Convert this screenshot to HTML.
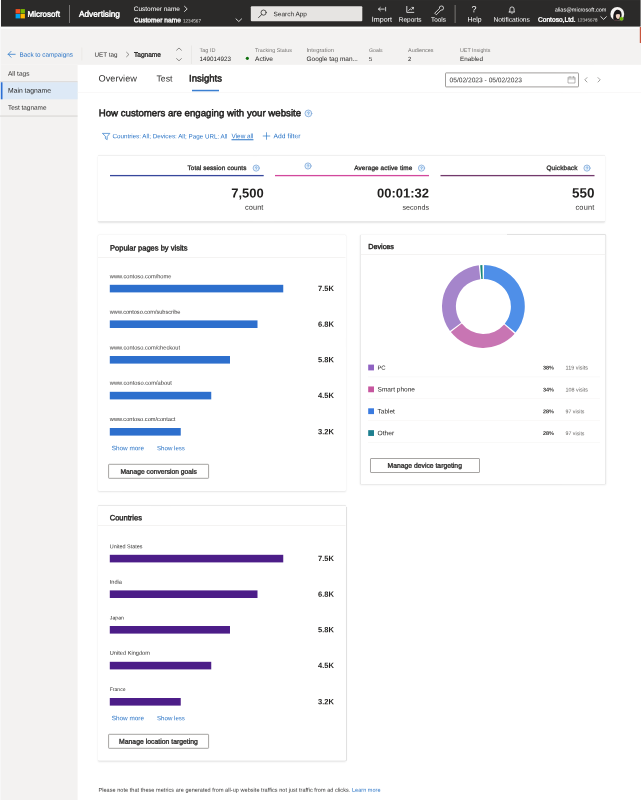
<!DOCTYPE html>
<html><head><meta charset="utf-8"><title>UET Insights</title>
<style>
html,body{margin:0;padding:0;}
body{width:641px;height:800px;position:relative;overflow:hidden;background:#fff;font-family:"Liberation Sans",sans-serif;text-rendering:geometricPrecision;}
.t{position:absolute;left:0;top:0;transform-origin:0 0;white-space:pre;display:block;}
.a{position:absolute;}
.card{position:absolute;background:#fff;box-shadow:0 0.6px 2px rgba(0,0,0,.10),0 0 0.9px rgba(0,0,0,.11);border-radius:1px;}
.btn{position:absolute;background:#fff;border:0.75px solid #a6a4a2;border-radius:1px;box-sizing:border-box;}
svg{position:absolute;overflow:visible;}
#w{position:absolute;left:0;top:0;width:641px;height:800px;transform-origin:0 0;will-change:transform;}
#v{filter:blur(0.3px);position:absolute;left:0;top:0;width:641px;height:800px;transform-origin:0 0;transform:rotate(0.001deg);}
</style></head><body><div id="w"><div id="v">
<svg width="641" height="800" style="left:0;top:0" viewBox="0 0 641 800"><rect x="1" y="0" width="639.6" height="26.85" fill="#2b2a29"/><rect x="0" y="26.8" width="641" height="38" fill="#f3f2f1"/><rect x="1" y="26.85" width="640" height="1.9" fill="#fbfbfa"/><rect x="0" y="65" width="77.6" height="735" fill="#f3f2f1"/><rect x="639.8" y="27" width="1.2" height="16" fill="#c8553d"/><rect x="0" y="0" width="1" height="800" fill="#f7f7f7"/><rect x="15.6" y="9.1" width="4.4" height="4.4" fill="#f25022"/><rect x="20.5" y="9.1" width="4.4" height="4.4" fill="#7fba00"/><rect x="15.6" y="14" width="4.4" height="4.4" fill="#00a4ef"/><rect x="20.5" y="14" width="4.4" height="4.4" fill="#ffb900"/><rect x="69.2" y="5" width="0.8" height="18" fill="#8a8886"/><rect x="454.7" y="5" width="0.8" height="18" fill="#8a8886"/><rect x="250.8" y="6.3" width="111.5" height="15" fill="#e6e4e2" rx="1"/><rect x="0" y="81.4" width="77.6" height="0.9" fill="#d2d0ce"/><rect x="0" y="82.3" width="77.6" height="17" fill="#dde9f6"/><rect x="0.9" y="82.3" width="1.6" height="17" fill="#2b6fd4"/><rect x="0" y="115.6" width="77.6" height="0.9" fill="#d2d0ce"/><rect x="81.6" y="47.5" width="0.6" height="13" fill="#e6e4e2"/><rect x="191" y="45.5" width="0.6" height="18.5" fill="#e3e1df"/><rect x="245.8" y="56.8" width="3.1" height="3.1" fill="#0e700e" rx="1.55"/><rect x="77.6" y="92.4" width="564" height="0.6" fill="#f5f4f3"/><rect x="192" y="89.8" width="27" height="1.5" fill="#3b7fd1"/></svg>
<div class="a" style="left:0;top:0;transform:translate(445px,72.4px);width:134px;height:14.5px;box-sizing:border-box;border:0.7px solid #a19f9d;border-radius:1px;background:#fff"></div>
<div class="card" style="left:0;top:0;transform:translate(98px,155.5px);width:507px;height:65.5px"></div>
<div class="card" style="left:0;top:0;transform:translate(98px,235px);width:247.5px;height:255.8px"></div>
<div class="card" style="left:0;top:0;transform:translate(360.5px,235px);width:244.7px;height:248.8px"></div>
<div class="card" style="left:0;top:0;transform:translate(98px,505.7px);width:247.5px;height:255.3px"></div>
<svg width="641" height="800" style="left:0;top:0" viewBox="0 0 641 800"></svg>
<svg width="641" height="800" style="left:0;top:0" viewBox="0 0 641 800"><rect x="110" y="174.95" width="153.7" height="1.3" fill="#37479c"/><rect x="275" y="174.95" width="154" height="1.3" fill="#d2479c"/><rect x="440.5" y="174.95" width="154" height="1.3" fill="#72386b"/><rect x="98" y="257.3" width="247.5" height="0.6" fill="#edebe9"/><rect x="360.5" y="254.2" width="244.7" height="0.6" fill="#edebe9"/><rect x="98" y="525" width="247.5" height="0.6" fill="#edebe9"/><rect x="109.8" y="284.8" width="173.45" height="7.6" fill="#2d6fcd"/><rect x="109.8" y="554.8" width="173.45" height="7.6" fill="#4c1d88"/><rect x="109.8" y="320.4" width="147.7" height="7.6" fill="#2d6fcd"/><rect x="109.8" y="590.4" width="147.7" height="7.6" fill="#4c1d88"/><rect x="109.8" y="356.0" width="120.2" height="7.6" fill="#2d6fcd"/><rect x="109.8" y="626.0" width="120.2" height="7.6" fill="#4c1d88"/><rect x="109.8" y="391.8" width="101.45" height="7.6" fill="#2d6fcd"/><rect x="109.8" y="661.8" width="101.45" height="7.6" fill="#4c1d88"/><rect x="109.8" y="428.0" width="70.95" height="7.6" fill="#2d6fcd"/><rect x="109.8" y="698.0" width="70.95" height="7.6" fill="#4c1d88"/></svg>
<div class="btn" style="left:0;top:0;transform:translate(108.1px,463.8px);width:100.8px;height:14.8px"></div>
<div class="btn" style="left:0;top:0;transform:translate(370px,458px);width:110px;height:14.5px"></div>
<div class="btn" style="left:0;top:0;transform:translate(108.1px,733.8px);width:100.8px;height:14.9px"></div>
<svg width="641" height="800" style="left:0;top:0" viewBox="0 0 641 800"><rect x="368.2" y="364.6" width="5.8" height="5.8" fill="#8f62c2"/><rect x="368" y="376.6" width="232" height="0.6" fill="#f6f5f4"/><rect x="368.2" y="386.45" width="5.8" height="5.8" fill="#c6569f"/><rect x="368" y="398.45" width="232" height="0.6" fill="#f6f5f4"/><rect x="368.2" y="408.3" width="5.8" height="5.8" fill="#3a7be0"/><rect x="368" y="420.3" width="232" height="0.6" fill="#f6f5f4"/><rect x="368.2" y="430.15" width="5.8" height="5.8" fill="#1e7f8f"/><rect x="368" y="442.15" width="232" height="0.6" fill="#f6f5f4"/></svg>
<svg width="641" height="800" style="left:0;top:0" viewBox="0 0 641 800"><path d="M484.12 265.11A41.4 41.4 0 0 1 515.57 332.55L504.77 323.81A27.5 27.5 0 0 0 483.88 279.00Z" fill="#4f8fe8"/><path d="M514.64 333.66A41.4 41.4 0 0 1 450.87 332.10L461.79 323.51A27.5 27.5 0 0 0 504.15 324.54Z" fill="#c875b3"/><path d="M449.99 330.95A41.4 41.4 0 0 1 478.79 265.36L480.33 279.17A27.5 27.5 0 0 0 461.21 322.74Z" fill="#a585cb"/><path d="M480.22 265.22A41.4 41.4 0 0 1 482.39 265.11L482.73 279.01A27.5 27.5 0 0 0 481.29 279.08Z" fill="#17877a"/></svg><svg width="641" height="800" style="left:0;top:0" viewBox="0 0 641 800" fill="none" stroke-linecap="round" stroke-linejoin="round"><path d="M184.5 6.3L187.2 8.9L184.5 11.5" stroke="#ffffff" stroke-width="0.8" fill="none"/><path d="M236 18.9L238.8 21.5L241.6 18.9" stroke="#ffffff" stroke-width="0.8" fill="none"/><path d="M600.8 16.7L603.6 19.4L606.4 16.7" stroke="#ffffff" stroke-width="0.8" fill="none"/><circle cx="263.6" cy="12.6" r="2.6" stroke="#323130" stroke-width="0.8" fill="none"/><path d="M261.7 14.5L258.6 17.6" stroke="#323130" stroke-width="0.9" fill="none"/><path d="M378.5 9.1H384.2M380.3 7.4L378.5 9.1L380.3 10.8M385.6 7.3V10.9" stroke="#ffffff" stroke-width="0.75" fill="none"/><path d="M406.8 6.4V12.4H413.8" stroke="#ffffff" stroke-width="0.8" fill="none"/><path d="M408.6 10.6L410.2 8.8L411.4 9.8L413.4 7.4M413.4 9V7.4H411.8" stroke="#ffffff" stroke-width="0.7" fill="none"/><path d="M435 12.9L439.4 8.5A2.1 2.1 0 1 1 441 10.1L436.6 14.5Z" stroke="#ffffff" stroke-width="0.75" fill="none"/><path d="M509.9 11.3V9A2.1 2.1 0 0 1 514.1 9V11.3L514.8 12H509.2Z" stroke="#ffffff" stroke-width="0.75" fill="none"/><path d="M511.2 12.9A0.9 0.9 0 0 0 512.8 12.9" stroke="#ffffff" stroke-width="0.7" fill="none"/><path d="M8.2 54.3H15.2M11 51.4L8.2 54.3L11 57.2" stroke="#2f7bc9" stroke-width="0.8" fill="none"/><path d="M126.6 52.3L128.9 54.5L126.6 56.7" stroke="#605e5c" stroke-width="0.7" fill="none"/><path d="M176.6 50.2L179 48L181.4 50.2" stroke="#605e5c" stroke-width="0.7" fill="none"/><path d="M176.6 58.6L179 60.8L181.4 58.6" stroke="#605e5c" stroke-width="0.7" fill="none"/><path d="M568.4 77.2H575V83H568.4ZM568.4 78.9H575M570 76.4V77.5M573.4 76.4V77.5" stroke="#8a8886" stroke-width="0.6" fill="none"/><path d="M587 77.6L584.8 79.8L587 82" stroke="#7a7876" stroke-width="0.7" fill="none"/><path d="M598 77.6L600.2 79.8L598 82" stroke="#7a7876" stroke-width="0.7" fill="none"/><path d="M102.8 133.4H109.8L107.2 136.6V139.6L105.4 138.6V136.6Z" stroke="#2f7bc9" stroke-width="0.7" fill="none"/><path d="M263.2 136H269.8M266.5 132.7V139.3" stroke="#2f7bc9" stroke-width="0.7" fill="none"/></svg>
<svg width="641" height="800" style="left:0;top:0" viewBox="0 0 641 800" fill="none" stroke-linecap="round"><circle cx="308.4" cy="113.4" r="3.4" stroke="#80a8d8" stroke-width="0.8" fill="#e8f2fc"/><path d="M307.54999999999995 112.65A0.9 0.9 0 1 1 308.4 113.65V114.0" stroke="#3f86d2" stroke-width="0.55"/><circle cx="308.4" cy="114.85000000000001" r="0.32" fill="#3f86d2"/></svg>
<svg width="641" height="800" style="left:0;top:0" viewBox="0 0 641 800" fill="none" stroke-linecap="round"><circle cx="256.2" cy="168.1" r="3.1" stroke="#80a8d8" stroke-width="0.8" fill="#e8f2fc"/><path d="M255.42499999999998 167.41617647058823A0.8205882352941177 0.8205882352941177 0 1 1 256.2 168.32794117647057V168.64705882352942" stroke="#3f86d2" stroke-width="0.50"/><circle cx="256.2" cy="169.4220588235294" r="0.29" fill="#3f86d2"/></svg>
<svg width="641" height="800" style="left:0;top:0" viewBox="0 0 641 800" fill="none" stroke-linecap="round"><circle cx="308" cy="166" r="3.1" stroke="#80a8d8" stroke-width="0.8" fill="#e8f2fc"/><path d="M307.225 165.31617647058823A0.8205882352941177 0.8205882352941177 0 1 1 308 166.22794117647058V166.54705882352943" stroke="#3f86d2" stroke-width="0.50"/><circle cx="308" cy="167.3220588235294" r="0.29" fill="#3f86d2"/></svg>
<svg width="641" height="800" style="left:0;top:0" viewBox="0 0 641 800" fill="none" stroke-linecap="round"><circle cx="421.5" cy="168.1" r="3.1" stroke="#80a8d8" stroke-width="0.8" fill="#e8f2fc"/><path d="M420.725 167.41617647058823A0.8205882352941177 0.8205882352941177 0 1 1 421.5 168.32794117647057V168.64705882352942" stroke="#3f86d2" stroke-width="0.50"/><circle cx="421.5" cy="169.4220588235294" r="0.29" fill="#3f86d2"/></svg>
<svg width="641" height="800" style="left:0;top:0" viewBox="0 0 641 800" fill="none" stroke-linecap="round"><circle cx="587" cy="168.1" r="3.1" stroke="#80a8d8" stroke-width="0.8" fill="#e8f2fc"/><path d="M586.225 167.41617647058823A0.8205882352941177 0.8205882352941177 0 1 1 587 168.32794117647057V168.64705882352942" stroke="#3f86d2" stroke-width="0.50"/><circle cx="587" cy="169.4220588235294" r="0.29" fill="#3f86d2"/></svg>
<span class="t" style="transform:translate(470px,4.2px) rotate(0.03deg);width:8px;text-align:center;font-size:9px;line-height:10px;color:#fff;">?</span>
<svg width="641" height="800" style="left:0;top:0" viewBox="0 0 641 800">
<defs><clipPath id="av"><circle cx="617.3" cy="13.9" r="6.9"/></clipPath></defs>
<circle cx="617.3" cy="13.9" r="6.9" fill="#f6f4f2"/>
<g clip-path="url(#av)">
<path d="M613.6 21.5C612.8 17 613.2 11.6 616.2 10C619.6 8.6 621.8 11.4 621.6 15L620.8 21.5Z" fill="#1b1718"/>
<path d="M615.8 14.8C616.8 13.8 618.8 13.6 620 14.6C620.2 17 619.4 18.8 618 19.2C616.6 18.8 615.6 17 615.8 14.8Z" fill="#efd0c0"/>
<path d="M616.6 19L618 21.5L619.4 19V21.5H616.6Z" fill="#efd0c0"/>
<path d="M611.5 21.5C612.5 19.2 614.6 18.6 616.4 18.9L618 20.6L619.6 18.9C621.2 18.8 623 19.4 623.6 21.5Z" fill="#2a2022"/><path d="M613.6 21.5L615.4 19.8L617.4 21.5Z" fill="#6a2a3a"/>
</g>
<circle cx="621.5" cy="18.8" r="1.8" fill="#6bb700" stroke="#a4d65e" stroke-width="0.4"/>
</svg>
<span class="t" style="transform:translate(27.50px,9.72px) rotate(0.03deg);font-size:8.01px;line-height:10px;font-weight:400;color:#ffffff;letter-spacing:0.0px;-webkit-text-stroke:0.42px #ffffff;">Microsoft</span>
<span class="t" style="transform:translate(79.00px,8.72px) rotate(0.03deg);font-size:8.29px;line-height:10px;font-weight:400;color:#ffffff;letter-spacing:0.0px;-webkit-text-stroke:0.43px #ffffff;">Advertising</span>
<span class="t" style="transform:translate(133.75px,6.06px) rotate(0.03deg);font-size:6.5px;line-height:8px;font-weight:400;color:#ffffff;letter-spacing:0.0px;">Customer name</span>
<span class="t" style="transform:translate(133.75px,17.31px) rotate(0.03deg);font-size:6.64px;line-height:8px;font-weight:400;color:#ffffff;letter-spacing:0.0px;-webkit-text-stroke:0.35px #ffffff;">Customer name</span>
<span class="t" style="transform:translate(183.00px,18.60px) rotate(0.03deg);font-size:4.62px;line-height:6px;font-weight:400;color:#e1dfdd;letter-spacing:0.0px;">1234567</span>
<span class="t" style="transform:translate(273.50px,11.31px) rotate(0.03deg);font-size:6.48px;line-height:8px;font-weight:400;color:#2b2a29;letter-spacing:0.0px;">Search App</span>
<span class="t" style="transform:translate(371.75px,15.81px) rotate(0.03deg);font-size:7.15px;line-height:9px;font-weight:400;color:#ffffff;letter-spacing:0.0px;">Import</span>
<span class="t" style="transform:translate(398.75px,16.81px) rotate(0.03deg);font-size:6.5px;line-height:8px;font-weight:400;color:#ffffff;letter-spacing:0.0px;">Reports</span>
<span class="t" style="transform:translate(431.00px,16.81px) rotate(0.03deg);font-size:6.43px;line-height:8px;font-weight:400;color:#ffffff;letter-spacing:0.0px;">Tools</span>
<span class="t" style="transform:translate(467.50px,16.81px) rotate(0.03deg);font-size:6.81px;line-height:8px;font-weight:400;color:#ffffff;letter-spacing:-0.0px;">Help</span>
<span class="t" style="transform:translate(493.50px,16.81px) rotate(0.03deg);font-size:6.7px;line-height:8px;font-weight:400;color:#ffffff;letter-spacing:0.0px;">Notifications</span>
<span class="t" style="transform:translate(554.75px,7.44px) rotate(0.03deg);font-size:5.57px;line-height:7px;font-weight:400;color:#ffffff;letter-spacing:0.0px;">alias@microsoft.com</span>
<span class="t" style="transform:translate(538.00px,16.81px) rotate(0.03deg);font-size:6.61px;line-height:8px;font-weight:400;color:#ffffff;letter-spacing:0.0px;-webkit-text-stroke:0.34px #ffffff;">Contoso,Ltd.</span>
<span class="t" style="transform:translate(577.50px,17.60px) rotate(0.03deg);font-size:4.49px;line-height:5px;font-weight:400;color:#e1dfdd;letter-spacing:0.0px;">12345678</span>
<span class="t" style="transform:translate(19.50px,51.74px) rotate(0.03deg);font-size:6.33px;line-height:8px;font-weight:400;color:#2a74c6;letter-spacing:0.0px;">Back to campaigns</span>
<span class="t" style="transform:translate(94.50px,51.74px) rotate(0.03deg);font-size:6.3px;line-height:8px;font-weight:400;color:#323130;letter-spacing:0.0px;">UET tag</span>
<span class="t" style="transform:translate(134.00px,51.74px) rotate(0.03deg);font-size:6.56px;line-height:8px;font-weight:400;color:#323130;letter-spacing:0.0px;-webkit-text-stroke:0.34px #323130;">Tagname</span>
<span class="t" style="transform:translate(199.50px,47.90px) rotate(0.03deg);font-size:5.54px;line-height:7px;font-weight:400;color:#777573;letter-spacing:0.0px;">Tag ID</span>
<span class="t" style="transform:translate(199.50px,55.99px) rotate(0.03deg);font-size:6.29px;line-height:8px;font-weight:400;color:#201f1e;letter-spacing:0.0px;">149014923</span>
<span class="t" style="transform:translate(255.00px,47.90px) rotate(0.03deg);font-size:5.35px;line-height:6px;font-weight:400;color:#777573;letter-spacing:0.0px;">Tracking Status</span>
<span class="t" style="transform:translate(255.00px,55.99px) rotate(0.03deg);font-size:6.61px;line-height:8px;font-weight:400;color:#201f1e;letter-spacing:0.0px;">Active</span>
<span class="t" style="transform:translate(306.50px,47.90px) rotate(0.03deg);font-size:5.82px;line-height:7px;font-weight:400;color:#777573;letter-spacing:-0.0px;">Integration</span>
<span class="t" style="transform:translate(306.50px,55.99px) rotate(0.03deg);font-size:6.48px;line-height:8px;font-weight:400;color:#201f1e;letter-spacing:0.0px;">Google tag man...</span>
<span class="t" style="transform:translate(369.00px,47.90px) rotate(0.03deg);font-size:5.17px;line-height:6px;font-weight:400;color:#777573;letter-spacing:0.0px;">Goals</span>
<span class="t" style="transform:translate(369.00px,56.99px) rotate(0.03deg);font-size:5.94px;line-height:7px;font-weight:400;color:#201f1e;letter-spacing:0px;">5</span>
<span class="t" style="transform:translate(408.00px,47.90px) rotate(0.03deg);font-size:5.46px;line-height:7px;font-weight:400;color:#777573;letter-spacing:0.0px;">Audiences</span>
<span class="t" style="transform:translate(408.00px,56.99px) rotate(0.03deg);font-size:5.94px;line-height:7px;font-weight:400;color:#201f1e;letter-spacing:0px;">2</span>
<span class="t" style="transform:translate(460.00px,47.90px) rotate(0.03deg);font-size:5.35px;line-height:6px;font-weight:400;color:#777573;letter-spacing:0.0px;">UET Insights</span>
<span class="t" style="transform:translate(460.00px,55.99px) rotate(0.03deg);font-size:6.27px;line-height:8px;font-weight:400;color:#201f1e;letter-spacing:0.0px;">Enabled</span>
<span class="t" style="transform:translate(8.00px,70.74px) rotate(0.03deg);font-size:6.56px;line-height:8px;font-weight:400;color:#323130;letter-spacing:0.0px;">All tags</span>
<span class="t" style="transform:translate(8.00px,87.74px) rotate(0.03deg);font-size:6.79px;line-height:8px;font-weight:400;color:#201f1e;letter-spacing:0.0px;">Main tagname</span>
<span class="t" style="transform:translate(8.00px,104.74px) rotate(0.03deg);font-size:6.41px;line-height:8px;font-weight:400;color:#323130;letter-spacing:0.0px;">Test tagname</span>
<span class="t" style="transform:translate(98.50px,73.55px) rotate(0.03deg);font-size:9.24px;line-height:11px;font-weight:400;color:#323130;letter-spacing:0.0px;">Overview</span>
<span class="t" style="transform:translate(156.50px,73.55px) rotate(0.03deg);font-size:8.72px;line-height:10px;font-weight:400;color:#323130;letter-spacing:0.0px;">Test</span>
<span class="t" style="transform:translate(189.00px,73.55px) rotate(0.03deg);font-size:9.58px;line-height:11px;font-weight:400;color:#201f1e;letter-spacing:0.0px;-webkit-text-stroke:0.50px #201f1e;">Insights</span>
<span class="t" style="transform:translate(449.50px,77.14px) rotate(0.03deg);font-size:6.65px;line-height:8px;font-weight:400;color:#323130;letter-spacing:0.0px;">05/02/2023 - 05/02/2023</span>
<span class="t" style="transform:translate(98.75px,108.20px) rotate(0.03deg);font-size:9.66px;line-height:12px;font-weight:400;color:#201f1e;letter-spacing:0.0px;-webkit-text-stroke:0.50px #201f1e;">How customers are engaging with your website</span>
<span class="t" style="transform:translate(112.50px,133.34px) rotate(0.03deg);font-size:6.25px;line-height:8px;font-weight:400;color:#2a74c6;letter-spacing:0.0px;">Countries: All; Devices: All; Page URL: All</span>
<span class="t" style="transform:translate(231.50px,133.34px) rotate(0.03deg);font-size:6.42px;line-height:8px;font-weight:400;color:#2a74c6;letter-spacing:0.0px;text-decoration:underline;text-decoration-thickness:0.5px;text-underline-offset:0.8px;">View all</span>
<span class="t" style="transform:translate(273.50px,133.34px) rotate(0.03deg);font-size:6.72px;line-height:8px;font-weight:400;color:#2a74c6;letter-spacing:0.048px;">Add filter</span>
<span class="t" style="transform:translate(187.50px,164.94px) rotate(0.03deg);font-size:6.38px;line-height:8px;font-weight:400;color:#323130;letter-spacing:0.076px;-webkit-text-stroke:0.33px #323130;">Total session counts</span>
<span class="t" style="transform:translate(231.25px,185.50px) rotate(0.03deg);font-size:12.99px;line-height:16px;font-weight:700;color:#201f1e;letter-spacing:0.0px;">7,500</span>
<span class="t" style="transform:translate(245.00px,202.74px) rotate(0.03deg);font-size:7.39px;line-height:9px;font-weight:400;color:#323130;letter-spacing:0.083px;">count</span>
<span class="t" style="transform:translate(354.25px,164.94px) rotate(0.03deg);font-size:6.38px;line-height:8px;font-weight:400;color:#323130;letter-spacing:0.121px;-webkit-text-stroke:0.33px #323130;">Average active time</span>
<span class="t" style="transform:translate(377.00px,185.50px) rotate(0.03deg);font-size:12.99px;line-height:16px;font-weight:700;color:#201f1e;letter-spacing:-0.0px;">00:01:32</span>
<span class="t" style="transform:translate(402.50px,203.74px) rotate(0.03deg);font-size:7.11px;line-height:9px;font-weight:400;color:#323130;letter-spacing:0.0px;">seconds</span>
<span class="t" style="transform:translate(546.50px,164.94px) rotate(0.03deg);font-size:6.38px;line-height:8px;font-weight:400;color:#323130;letter-spacing:0.133px;-webkit-text-stroke:0.33px #323130;">Quickback</span>
<span class="t" style="transform:translate(572.00px,185.50px) rotate(0.03deg);font-size:13.49px;line-height:16px;font-weight:700;color:#201f1e;letter-spacing:0.0px;">550</span>
<span class="t" style="transform:translate(575.50px,202.74px) rotate(0.03deg);font-size:7.39px;line-height:9px;font-weight:400;color:#323130;letter-spacing:0.183px;">count</span>
<span class="t" style="transform:translate(110.00px,243.55px) rotate(0.03deg);font-size:7.54px;line-height:9px;font-weight:400;color:#201f1e;letter-spacing:0.0px;-webkit-text-stroke:0.39px #201f1e;">Popular pages by visits</span>
<span class="t" style="transform:translate(109.80px,274.30px) rotate(0.03deg);font-size:5.69px;line-height:7px;font-weight:400;color:#323130;letter-spacing:0.0px;">www.contoso.com/home</span>
<span class="t" style="transform:translate(318.00px,284.10px) rotate(0.03deg);font-size:7.57px;line-height:9px;font-weight:700;color:#201f1e;letter-spacing:0.0px;">7.5K</span>
<span class="t" style="transform:translate(109.80px,309.80px) rotate(0.03deg);font-size:5.6px;line-height:7px;font-weight:400;color:#323130;letter-spacing:0.0px;">www.contoso.com/subscribe</span>
<span class="t" style="transform:translate(318.00px,319.70px) rotate(0.03deg);font-size:7.57px;line-height:9px;font-weight:700;color:#201f1e;letter-spacing:0.0px;">6.8K</span>
<span class="t" style="transform:translate(109.80px,345.40px) rotate(0.03deg);font-size:5.69px;line-height:7px;font-weight:400;color:#323130;letter-spacing:0.0px;">www.contoso.com/checkout</span>
<span class="t" style="transform:translate(318.00px,355.30px) rotate(0.03deg);font-size:7.57px;line-height:9px;font-weight:700;color:#201f1e;letter-spacing:0.0px;">5.8K</span>
<span class="t" style="transform:translate(109.80px,380.80px) rotate(0.03deg);font-size:5.74px;line-height:7px;font-weight:400;color:#323130;letter-spacing:0.0px;">www.contoso.com/about</span>
<span class="t" style="transform:translate(318.00px,391.10px) rotate(0.03deg);font-size:7.57px;line-height:9px;font-weight:700;color:#201f1e;letter-spacing:0.0px;">4.5K</span>
<span class="t" style="transform:translate(109.80px,417.00px) rotate(0.03deg);font-size:5.68px;line-height:7px;font-weight:400;color:#323130;letter-spacing:0.0px;">www.contoso.com/contact</span>
<span class="t" style="transform:translate(318.00px,427.30px) rotate(0.03deg);font-size:7.57px;line-height:9px;font-weight:700;color:#201f1e;letter-spacing:0.0px;">3.2K</span>
<span class="t" style="transform:translate(111.75px,445.30px) rotate(0.03deg);font-size:6.38px;line-height:8px;font-weight:400;color:#2a74c6;letter-spacing:0.0px;">Show more</span>
<span class="t" style="transform:translate(157.00px,445.30px) rotate(0.03deg);font-size:6.14px;line-height:7px;font-weight:400;color:#2a74c6;letter-spacing:0.0px;">Show less</span>
<span class="t" style="transform:translate(120.50px,468.74px) rotate(0.03deg);font-size:6.71px;line-height:8px;font-weight:400;color:#323130;letter-spacing:0.0px;-webkit-text-stroke:0.35px #323130;">Manage conversion goals</span>
<span class="t" style="transform:translate(368.25px,242.05px) rotate(0.03deg);font-size:7.24px;line-height:9px;font-weight:400;color:#201f1e;letter-spacing:0.0px;-webkit-text-stroke:0.38px #201f1e;">Devices</span>
<span class="t" style="transform:translate(377.60px,365.74px) rotate(0.03deg);font-size:5.94px;line-height:7px;font-weight:400;color:#201f1e;letter-spacing:-0.326px;">PC</span>
<span class="t" style="transform:translate(543.00px,365.57px) rotate(0.03deg);font-size:5.5px;line-height:7px;font-weight:700;color:#323130;letter-spacing:0.0px;">38%</span>
<span class="t" style="transform:translate(565.50px,365.57px) rotate(0.03deg);font-size:5.5px;line-height:7px;font-weight:400;color:#666462;letter-spacing:0.0px;">119 visits</span>
<span class="t" style="transform:translate(377.60px,386.59px) rotate(0.03deg);font-size:6.53px;line-height:8px;font-weight:400;color:#201f1e;letter-spacing:0.0px;">Smart phone</span>
<span class="t" style="transform:translate(543.00px,387.42px) rotate(0.03deg);font-size:5.5px;line-height:7px;font-weight:700;color:#323130;letter-spacing:0.0px;">34%</span>
<span class="t" style="transform:translate(565.50px,387.42px) rotate(0.03deg);font-size:5.4px;line-height:6px;font-weight:400;color:#666462;letter-spacing:0.0px;">108 visits</span>
<span class="t" style="transform:translate(377.60px,408.44px) rotate(0.03deg);font-size:6.45px;line-height:8px;font-weight:400;color:#201f1e;letter-spacing:0.0px;">Tablet</span>
<span class="t" style="transform:translate(543.00px,409.27px) rotate(0.03deg);font-size:5.5px;line-height:7px;font-weight:700;color:#323130;letter-spacing:0.0px;">28%</span>
<span class="t" style="transform:translate(565.50px,409.27px) rotate(0.03deg);font-size:5.26px;line-height:6px;font-weight:400;color:#666462;letter-spacing:0.0px;">97 visits</span>
<span class="t" style="transform:translate(377.60px,430.29px) rotate(0.03deg);font-size:6.64px;line-height:8px;font-weight:400;color:#201f1e;letter-spacing:0.0px;">Other</span>
<span class="t" style="transform:translate(543.00px,431.12px) rotate(0.03deg);font-size:5.5px;line-height:7px;font-weight:700;color:#323130;letter-spacing:0.0px;">28%</span>
<span class="t" style="transform:translate(565.50px,431.12px) rotate(0.03deg);font-size:5.26px;line-height:6px;font-weight:400;color:#666462;letter-spacing:0.0px;">97 visits</span>
<span class="t" style="transform:translate(387.50px,462.74px) rotate(0.03deg);font-size:6.8px;line-height:8px;font-weight:400;color:#323130;letter-spacing:0.0px;-webkit-text-stroke:0.35px #323130;">Manage device targeting</span>
<span class="t" style="transform:translate(109.70px,513.20px) rotate(0.03deg);font-size:7.55px;line-height:9px;font-weight:400;color:#201f1e;letter-spacing:0.0px;-webkit-text-stroke:0.39px #201f1e;">Countries</span>
<span class="t" style="transform:translate(109.80px,544.30px) rotate(0.03deg);font-size:5.45px;line-height:7px;font-weight:400;color:#323130;letter-spacing:0.0px;">United States</span>
<span class="t" style="transform:translate(318.00px,554.10px) rotate(0.03deg);font-size:7.57px;line-height:9px;font-weight:700;color:#201f1e;letter-spacing:0.0px;">7.5K</span>
<span class="t" style="transform:translate(109.80px,579.80px) rotate(0.03deg);font-size:5.63px;line-height:7px;font-weight:400;color:#323130;letter-spacing:0.0px;">India</span>
<span class="t" style="transform:translate(318.00px,589.70px) rotate(0.03deg);font-size:7.57px;line-height:9px;font-weight:700;color:#201f1e;letter-spacing:0.0px;">6.8K</span>
<span class="t" style="transform:translate(109.80px,615.40px) rotate(0.03deg);font-size:5.21px;line-height:6px;font-weight:400;color:#323130;letter-spacing:0.0px;">Japan</span>
<span class="t" style="transform:translate(318.00px,625.30px) rotate(0.03deg);font-size:7.57px;line-height:9px;font-weight:700;color:#201f1e;letter-spacing:0.0px;">5.8K</span>
<span class="t" style="transform:translate(109.80px,650.80px) rotate(0.03deg);font-size:5.65px;line-height:7px;font-weight:400;color:#323130;letter-spacing:0.0px;">United Kingdom</span>
<span class="t" style="transform:translate(318.00px,661.10px) rotate(0.03deg);font-size:7.57px;line-height:9px;font-weight:700;color:#201f1e;letter-spacing:0.0px;">4.5K</span>
<span class="t" style="transform:translate(109.80px,687.00px) rotate(0.03deg);font-size:5.04px;line-height:6px;font-weight:400;color:#323130;letter-spacing:0.0px;">France</span>
<span class="t" style="transform:translate(318.00px,697.30px) rotate(0.03deg);font-size:7.57px;line-height:9px;font-weight:700;color:#201f1e;letter-spacing:0.0px;">3.2K</span>
<span class="t" style="transform:translate(111.75px,715.30px) rotate(0.03deg);font-size:6.38px;line-height:8px;font-weight:400;color:#2a74c6;letter-spacing:0.0px;">Show more</span>
<span class="t" style="transform:translate(157.00px,715.30px) rotate(0.03deg);font-size:6.14px;line-height:7px;font-weight:400;color:#2a74c6;letter-spacing:0.0px;">Show less</span>
<span class="t" style="transform:translate(119.00px,738.74px) rotate(0.03deg);font-size:6.86px;line-height:8px;font-weight:400;color:#323130;letter-spacing:0.0px;-webkit-text-stroke:0.36px #323130;">Manage location targeting</span>
<span class="t" style="transform:translate(98.50px,787.67px) rotate(0.03deg);font-size:5.49px;line-height:7px;font-weight:400;color:#323130;letter-spacing:0.063px;">Please note that these metrics are generated from all-up website traffics not just traffic from ad clicks.</span>
<span class="t" style="transform:translate(352.00px,787.67px) rotate(0.03deg);font-size:5.49px;line-height:7px;font-weight:400;color:#2a74c6;letter-spacing:0.044px;">Learn more</span>
</div></div></body></html>
